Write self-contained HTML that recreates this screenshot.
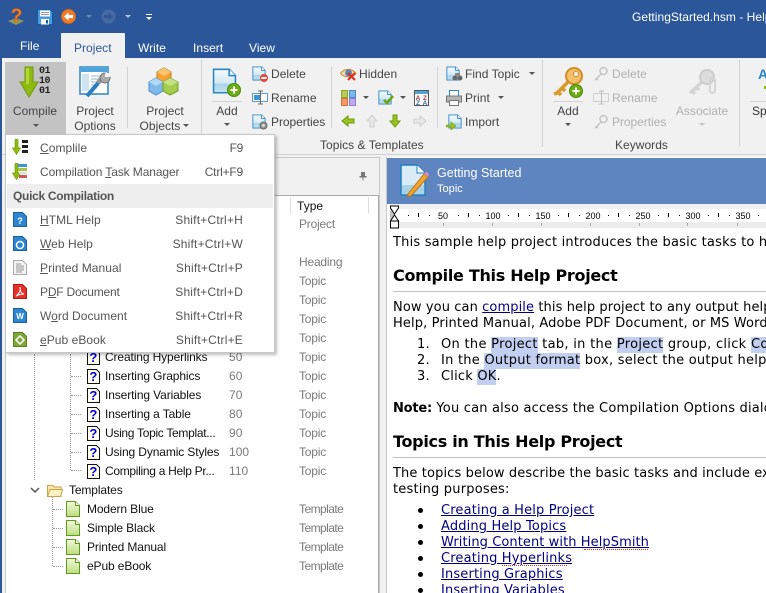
<!DOCTYPE html>
<html><head><meta charset="utf-8"><title>HelpSmith</title>
<style>
html,body{margin:0;padding:0;overflow:hidden}
html{width:766px;height:593px}
body{width:766px;height:593px;position:relative;background:#f1f1f1;font:12px/16px "Liberation Sans",sans-serif;color:#444}
div,span,svg,a{position:absolute}
#root{left:0;top:0;width:766px;height:593px;overflow:hidden}
.t{white-space:nowrap;letter-spacing:.03px}
.c{text-align:center;transform:translateX(-50%)}
.r{text-align:right;transform:translateX(-100%)}
.dis{color:#b0b0b0}
.arrow{width:0;height:0;border:3px solid transparent;border-top:3px solid #555;border-bottom:0}
.sep{width:1px;background:#d4d4d4}
.tree{color:#111;letter-spacing:-.12px}
.ty{color:#7a7a7a;letter-spacing:-.2px}
.tm{letter-spacing:-.55px}
.num{color:#7a7a7a}
.doc{font-family:"DejaVu Sans",sans-serif;font-size:13px;line-height:16px;color:#000;white-space:nowrap;letter-spacing:.2px}
.doc a{position:static;color:#00007f;text-decoration:underline}
.doc b{font-weight:bold;letter-spacing:-.2px}
.doc mark{background:#c3cff0;color:#000;padding:0;display:inline-block;line-height:16px;height:16px}
.h{font-family:"DejaVu Sans",sans-serif;font-size:16px;font-weight:bold;color:#000;white-space:nowrap;line-height:22px;letter-spacing:-.3px}
.m{color:#555;white-space:nowrap;letter-spacing:.05px}
.mr{letter-spacing:.2px}
u{text-decoration:underline}
.dot{width:5px;height:5px;background:#000;border-radius:50%}
.sp{height:0;border-top:1px dotted #d8322a}
</style></head><body>
<div id="root">
<svg width="0" height="0" style="left:0;top:0">
<defs>
<linearGradient id="pg" x1="0" y1="0" x2="0" y2="1"><stop offset="0" stop-color="#f4fafd"/><stop offset=".6" stop-color="#d4e9f5"/><stop offset=".62" stop-color="#a9d2e6"/><stop offset="1" stop-color="#c4e2f0"/></linearGradient>
<linearGradient id="tg" x1="0" y1="0" x2="0" y2="1"><stop offset="0" stop-color="#f1f8df"/><stop offset="1" stop-color="#bddd7e"/></linearGradient>
<symbol id="q" viewBox="0 0 13 15"><path d="M.5.5H9.500L12.500 3.500V14.500H.5Z" fill="#fffff4" stroke="#111"/><text x="6.400" y="12" font-family="Liberation Sans" font-weight="bold" font-size="13" fill="#0000e0" text-anchor="middle">?</text></symbol>
<symbol id="tp" viewBox="0 0 14 16"><path d="M.5.5H9.500L13.500 4.500V15.500H.5Z" fill="url(#tg)" stroke="#5f9a1a"/><path d="M9.500.5V4.500H13.500" fill="#fff" stroke="#5f9a1a"/></symbol>
<symbol id="page" viewBox="0 0 16 16"><path d="M1 .5H11L15 4.500V15.500H1Z" fill="url(#pg)" stroke="#2a86c4"/><path d="M11 .5V4.500H15" fill="#fff" stroke="#2a86c4"/></symbol>
<symbol id="plus" viewBox="0 0 14 14"><circle cx="7" cy="7" r="6.500" fill="#6cad12" stroke="#4d8a0c"/><path d="M7 3.500V10.500M3.500 7H10.500" stroke="#fff" stroke-width="2"/></symbol>
<symbol id="dk" viewBox="0 0 16 16"><g fill="none" stroke="#c4c4c4" stroke-width="1.500"><circle cx="10.500" cy="5" r="3.500"/><path d="M8 8L2 14M3 12l2 2"/></g></symbol>
</defs>
</svg>

<!-- title bar -->
<div style="left:0;top:0;width:766px;height:58px;background:#2b579a"></div>
<svg style="left:7px;top:7px" width="19" height="19" viewBox="0 0 19 19"><path d="M1 14L9 11l8 3-8 4z" fill="#8d9a5c"/><text x="9.500" y="15" font-family="Liberation Sans" font-weight="bold" font-size="19" fill="#f0821c" stroke="#c9501a" stroke-width=".5" text-anchor="middle">?</text></svg>
<svg style="left:37px;top:9px" width="16" height="16" viewBox="0 0 16 16"><path d="M.5.5H13L15.500 3V15.500H.5Z" fill="#4a9adf" stroke="#0f5f9f"/><rect x="3" y="1.500" width="10" height="6" fill="#fff"/><path d="M4 3.500H12M4 5.500H12" stroke="#99b"/><rect x="4" y="10" width="8" height="5.500" fill="#fff"/><rect x="9" y="11" width="2" height="3.500" fill="#0f5f9f"/></svg>
<svg style="left:61px;top:9px" width="15" height="15" viewBox="0 0 15 15"><circle cx="7.500" cy="7.500" r="7" fill="#ee7c2b" stroke="#d9681c"/><path d="M3 7.500L7.500 3.500V6H12V9H7.500V11.500Z" fill="#fff"/></svg>
<div class="arrow" style="left:86px;top:15px;border-top-color:#6d87b3"></div>
<svg style="left:101px;top:9px" width="15" height="15" viewBox="0 0 15 15"><circle cx="7.500" cy="7.500" r="7" fill="#47699f"/><path d="M12 7.500L7.500 3.500V6H3V9H7.500V11.500Z" fill="#2e5896"/></svg>
<div class="arrow" style="left:125px;top:15px;border-top-color:#b9c7dd"></div>
<div style="left:146px;top:14px;width:6px;height:1px;background:#fff"></div>
<div class="arrow" style="left:146px;top:17px;border-top-color:#fff"></div>
<div class="t" style="left:632px;top:9px;color:#fff">GettingStarted.hsm - Help</div>

<!-- tabs -->
<div class="t" style="left:20px;top:38px;color:#fff">File</div>
<div style="left:61px;top:33px;width:64px;height:26px;background:#f1f1f1;border-radius:1px 1px 0 0"></div>
<div class="t" style="left:74px;top:40px;color:#2b579a">Project</div>
<div class="t" style="left:138px;top:40px;color:#fff">Write</div>
<div class="t" style="left:193px;top:40px;color:#fff">Insert</div>
<div class="t" style="left:249px;top:40px;color:#fff">View</div>

<!-- ribbon -->
<div style="left:0;top:58px;width:766px;height:96px;background:#f1f1f1;border-bottom:1px solid #d0d0d0"></div>
<div style="left:0;top:58px;width:2px;height:535px;background:#2b579a"></div>
<div style="left:5px;top:62px;width:61px;height:73px;background:#c3c3c3"></div>
<svg style="left:19px;top:66px" width="34" height="32" viewBox="0 0 34 32"><path d="M6 1H14V16H19L10 31L1 16H6Z" fill="#8fbb10" stroke="#6e9a0a"/><path d="M7 2H10V18H7z" fill="#b3d63d"/></svg>
<div style="left:38px;top:67px;width:13px;font:bold 10px/10px 'Liberation Mono',monospace;color:#222;text-align:center;letter-spacing:-.5px">01<br>10<br>01</div>
<div class="t c" style="left:35px;top:103px">Compile</div>
<div class="arrow" style="left:33px;top:124px"></div>

<svg style="left:79px;top:66px" width="32" height="32" viewBox="0 0 32 32"><rect x="1" y="1" width="28" height="27" fill="#fff" stroke="#2a86c4" stroke-width="1.500"/><rect x="2" y="2" width="26" height="4" fill="#4da3dc"/><rect x="3" y="8" width="7" height="17" fill="#cfe3f3"/><path d="M12 10H24M12 13H24M12 16H20M12 19H20M12 22H18" stroke="#9db4c6"/><path d="M8 30L20 16" stroke="#2a7fc0" stroke-width="4"/><path d="M19 17L26 8" stroke="#999" stroke-width="5"/><circle cx="26" cy="12" r="5" fill="#aaa" stroke="#777"/><rect x="26" y="7" width="5" height="4" fill="#f1f1f1"/></svg>
<div class="t c" style="left:95px;top:103px">Project</div>
<div class="t c" style="left:95px;top:118px">Options</div>
<div class="sep" style="left:127px;top:67px;height:61px"></div>

<svg style="left:148px;top:67px" width="32" height="30" viewBox="0 0 32 30"><path d="M9 5L16 1 23 5V14L16 18 9 14Z" fill="#f4a235" stroke="#c97d16"/><path d="M9 5L16 9 23 5 16 1Z" fill="#f9c56f"/><path d="M1 15L8 11 15 15V24L8 28 1 24Z" fill="#7db9ea" stroke="#4a8cc4"/><path d="M1 15L8 19 15 15 8 11Z" fill="#b4d8f5"/><path d="M15 15L22 11 30 15V24L22 28 15 24Z" fill="#a4cc4e" stroke="#759d2a"/><path d="M15 15L22 19 30 15 22 11Z" fill="#c7e286"/></svg>
<div class="t c" style="left:165px;top:103px">Project</div>
<div class="t c" style="left:160px;top:118px">Objects</div>
<div class="arrow" style="left:183px;top:124px"></div>
<div class="sep" style="left:201px;top:60px;height:75px"></div>

<svg style="left:212px;top:67px" width="30" height="31" viewBox="0 0 30 31"><use href="#page" x="0" y="0" width="25" height="28"/><use href="#plus" x="15" y="16" width="14" height="14"/></svg>
<div style="left:212px;top:101px;width:30px;height:1px;background:#d4d4d4"></div>
<div class="t c" style="left:227px;top:103px">Add</div>
<div class="arrow" style="left:224px;top:123px"></div>

<svg style="left:252px;top:66px" width="16" height="16" viewBox="0 0 16 16"><use href="#page" width="14" height="15"/><circle cx="12" cy="12" r="4" fill="#e04a3a"/><rect x="9.500" y="11" width="5" height="2" fill="#fff"/></svg>
<div class="t" style="left:271px;top:66px">Delete</div>
<svg style="left:252px;top:90px" width="16" height="16" viewBox="0 0 16 16"><rect x=".5" y="3.500" width="15" height="8" fill="#fff" stroke="#5f9cc9"/><rect x="2" y="5" width="6" height="5" fill="#3f96d6"/><path d="M8.500 1V14M6 1H11M6 14H11" stroke="#666"/></svg>
<div class="t" style="left:271px;top:90px">Rename</div>
<svg style="left:252px;top:114px" width="16" height="16" viewBox="0 0 16 16"><use href="#page" width="14" height="15"/><circle cx="11.500" cy="11.500" r="3.500" fill="#999" stroke="#666"/><circle cx="11.500" cy="11.500" r="1.200" fill="#eee"/></svg>
<div class="t" style="left:271px;top:114px;letter-spacing:-.05px">Properties</div>
<div class="sep" style="left:331px;top:67px;height:61px"></div>

<svg style="left:340px;top:66px" width="17" height="16" viewBox="0 0 17 16"><path d="M.5 7.500C4 2 12 2 16 7.500 12 12 4 12 .5 7.500Z" fill="#f3dca8" stroke="#c98a2d"/><circle cx="8.500" cy="7" r="3.500" fill="#5a87b8"/><path d="M8 7L15 14M15 7L8 14" stroke="#e0281c" stroke-width="2"/></svg>
<div class="t" style="left:359px;top:66px">Hidden</div>
<svg style="left:341px;top:90px" width="15" height="16" viewBox="0 0 15 16"><rect x=".5" y=".5" width="6" height="7" fill="#b6cc55" stroke="#8ca52e"/><rect x="8.500" y=".5" width="6" height="7" fill="#7ab8ea" stroke="#4a8cc4"/><rect x=".5" y="8.500" width="6" height="7" fill="#f59a62" stroke="#d0743c"/><rect x="8.500" y="8.500" width="6" height="7" fill="#bfaaf0" stroke="#937cd0"/></svg>
<div class="arrow" style="left:363px;top:96px"></div>
<svg style="left:378px;top:90px" width="17" height="16" viewBox="0 0 17 16"><use href="#page" width="14" height="15"/><path d="M6 10L9 13 15 6" fill="none" stroke="#6ca412" stroke-width="2.500"/></svg>
<div class="arrow" style="left:400px;top:96px"></div>
<svg style="left:414px;top:90px" width="15" height="16" viewBox="0 0 15 16"><rect x=".5" y=".5" width="14" height="15" fill="#fff" stroke="#555"/><rect x="1" y="1" width="13" height="3" fill="#4da3dc"/><text x="4" y="10" font-size="6.500" font-weight="bold" font-family="Liberation Sans" fill="#a33" text-anchor="middle">A</text><text x="11" y="10" font-size="6.500" font-weight="bold" font-family="Liberation Sans" fill="#a33" text-anchor="middle">Z</text><text x="4" y="15" font-size="6.500" font-weight="bold" font-family="Liberation Sans" fill="#36a" text-anchor="middle">Z</text><text x="11" y="15" font-size="6.500" font-weight="bold" font-family="Liberation Sans" fill="#36a" text-anchor="middle">A</text></svg>

<svg style="left:341px;top:114px" width="14" height="14" viewBox="0 0 14 14"><path d="M1 7L7 2V5H13V9H7V12Z" fill="#9cc421" stroke="#6d9a0c"/></svg>
<svg style="left:365px;top:114px" width="14" height="14" viewBox="0 0 14 14"><path d="M7 1L12 7H9V13H5V7H2Z" fill="#e8e8e8" stroke="#cfcfcf"/></svg>
<svg style="left:388px;top:114px" width="14" height="14" viewBox="0 0 14 14"><path d="M7 13L12 7H9V1H5V7H2Z" fill="#9cc421" stroke="#6d9a0c"/></svg>
<svg style="left:413px;top:114px" width="14" height="14" viewBox="0 0 14 14"><path d="M13 7L7 2V5H1V9H7V12Z" fill="#e8e8e8" stroke="#cfcfcf"/></svg>
<div class="sep" style="left:437px;top:67px;height:61px"></div>

<svg style="left:446px;top:66px" width="17" height="16" viewBox="0 0 17 16"><use href="#page" width="14" height="15"/><circle cx="9" cy="12" r="2.500" fill="#666"/><circle cx="14" cy="12" r="2.500" fill="#666"/><rect x="9" y="7" width="5" height="3" fill="#888"/></svg>
<div class="t" style="left:465px;top:66px">Find Topic</div>
<div class="arrow" style="left:529px;top:72px"></div>
<svg style="left:446px;top:90px" width="16" height="16" viewBox="0 0 16 16"><rect x="3.500" y=".5" width="9" height="6" fill="#fff" stroke="#2a86c4"/><rect x=".5" y="6" width="15" height="6" fill="#b5b5b5" stroke="#777"/><rect x="3.500" y="10.500" width="9" height="5" fill="#fff" stroke="#777"/></svg>
<div class="t" style="left:465px;top:90px">Print</div>
<div class="arrow" style="left:498px;top:96px"></div>
<svg style="left:446px;top:114px" width="16" height="16" viewBox="0 0 16 16"><use href="#page" x="2" width="14" height="15"/><path d="M0 11H5V8L10 12 5 16V13H0Z" fill="#9cc421" stroke="#6d9a0c" stroke-width=".6"/></svg>
<div class="t" style="left:465px;top:114px">Import</div>
<div class="sep" style="left:542px;top:60px;height:87px"></div>

<svg style="left:553px;top:67px" width="32" height="31" viewBox="0 0 32 31"><path d="M18 12L4 26 1 27M5 25l3 3M9 21l3 3" fill="none" stroke="#d99a2c" stroke-width="3.500"/><circle cx="21" cy="9" r="8" fill="#f3c069" stroke="#d08e28" stroke-width="2"/><circle cx="23" cy="7" r="2.500" fill="#f1f1f1" stroke="#d08e28"/><use href="#plus" x="16" y="17" width="14" height="14"/></svg>
<div style="left:553px;top:101px;width:30px;height:1px;background:#d4d4d4"></div>
<div class="t c" style="left:568px;top:103px">Add</div>
<div class="arrow" style="left:565px;top:123px"></div>

<svg style="left:593px;top:66px" width="16" height="16"><use href="#dk" width="16" height="16"/></svg>
<div class="t dis" style="left:612px;top:66px">Delete</div>
<svg style="left:593px;top:90px" width="16" height="16" viewBox="0 0 16 16"><rect x=".5" y="3.500" width="15" height="8" fill="none" stroke="#cfcfcf"/><path d="M8.500 1V14M6 1H11M6 14H11" stroke="#bdbdbd"/></svg>
<div class="t dis" style="left:612px;top:90px">Rename</div>
<svg style="left:593px;top:114px" width="16" height="16"><use href="#dk" width="16" height="16"/></svg>
<div class="t dis" style="left:612px;top:114px;letter-spacing:-.05px">Properties</div>
<svg style="left:688px;top:68px" width="30" height="30" viewBox="0 0 30 30"><path d="M15 13L2 25M4 23l3 3M8 19l3 3" fill="none" stroke="#d4d4d4" stroke-width="3.500"/><circle cx="19" cy="9" r="7" fill="#dcdcdc" stroke="#cdcdcd" stroke-width="2"/><rect x="22" y="10" width="5" height="15" rx="2.500" fill="none" stroke="#d4d4d4" stroke-width="2"/></svg>
<div class="t c dis" style="left:702px;top:103px">Associate</div>
<div class="arrow" style="left:699px;top:123px;border-top-color:#c5c5c5"></div>
<div class="sep" style="left:739px;top:60px;height:87px"></div>
<div style="left:758px;top:67px;color:#2a86c4;font:bold 14px/14px 'Liberation Sans',sans-serif">A</div>
<div style="left:764px;top:86px;width:2px;height:3px;background:#8fbb10"></div>
<div style="left:750px;top:101px;width:16px;height:1px;background:#d4d4d4"></div>
<div class="t" style="left:752px;top:103px;color:#333">Spe</div>
<div class="t" style="left:320px;top:137px">Topics &amp; Templates</div>
<div class="t" style="left:615px;top:137px">Keywords</div>

<!-- left pane -->
<div style="left:5px;top:157px;width:375px;height:436px;background:#f1f1f1;border:1px solid #c8c8c8;border-bottom:0;box-sizing:border-box"></div>
<svg style="left:358px;top:171px" width="10" height="10" viewBox="0 0 10 10"><path d="M3 1H7V5H8.500V6.500H5.500V9.500H4.500V6.500H1.500V5H3Z" fill="#777"/></svg>
<div style="left:6px;top:195px;width:373px;height:398px;background:#fff;border-top:1px solid #aaa;box-sizing:border-box;border-right:1px solid #aaa"></div>
<div style="left:290px;top:197px;width:1px;height:17px;background:#ddd"></div>
<div style="left:368px;top:197px;width:1px;height:17px;background:#ddd"></div>
<div class="t" style="left:297px;top:198px;color:#111">Type</div>
<div class="t ty" style="left:299px;top:216px">Project</div>
<div class="t ty" style="left:299px;top:254px">Heading</div>
<div class="t ty" style="left:299px;top:273px">Topic</div>
<div class="t ty" style="left:299px;top:292px">Topic</div>
<div class="t ty" style="left:299px;top:311px">Topic</div>
<div class="t ty" style="left:299px;top:330px">Topic</div>

<!-- tree dotted lines -->
<div style="left:34px;top:354px;width:0;height:126px;border-left:1px dotted #999"></div>
<div style="left:70px;top:354px;width:0;height:116px;border-left:1px dotted #999"></div>
<div style="left:52px;top:497px;width:0;height:69px;border-left:1px dotted #999"></div>

<div style="left:71px;top:376px;width:10px;border-top:1px dotted #999"></div>
<div style="left:71px;top:395px;width:10px;border-top:1px dotted #999"></div>
<div style="left:71px;top:414px;width:10px;border-top:1px dotted #999"></div>
<div style="left:71px;top:433px;width:10px;border-top:1px dotted #999"></div>
<div style="left:71px;top:452px;width:10px;border-top:1px dotted #999"></div>
<div style="left:71px;top:470px;width:10px;border-top:1px dotted #999"></div>
<div style="left:53px;top:509px;width:10px;border-top:1px dotted #999"></div>
<div style="left:53px;top:528px;width:10px;border-top:1px dotted #999"></div>
<div style="left:53px;top:547px;width:10px;border-top:1px dotted #999"></div>
<div style="left:53px;top:566px;width:10px;border-top:1px dotted #999"></div>

<svg style="left:87px;top:350px" width="13" height="15"><use href="#q" width="13" height="15"/></svg>
<svg style="left:87px;top:369px" width="13" height="15"><use href="#q" width="13" height="15"/></svg>
<svg style="left:87px;top:388px" width="13" height="15"><use href="#q" width="13" height="15"/></svg>
<svg style="left:87px;top:407px" width="13" height="15"><use href="#q" width="13" height="15"/></svg>
<svg style="left:87px;top:426px" width="13" height="15"><use href="#q" width="13" height="15"/></svg>
<svg style="left:87px;top:445px" width="13" height="15"><use href="#q" width="13" height="15"/></svg>
<svg style="left:87px;top:464px" width="13" height="15"><use href="#q" width="13" height="15"/></svg>

<div class="t tree" style="left:105px;top:349px">Creating Hyperlinks</div><div class="t num" style="left:229px;top:349px">50</div><div class="t ty" style="left:299px;top:349px">Topic</div>
<div class="t tree" style="left:105px;top:368px">Inserting Graphics</div><div class="t num" style="left:229px;top:368px">60</div><div class="t ty" style="left:299px;top:368px">Topic</div>
<div class="t tree" style="left:105px;top:387px">Inserting Variables</div><div class="t num" style="left:229px;top:387px">70</div><div class="t ty" style="left:299px;top:387px">Topic</div>
<div class="t tree" style="left:105px;top:406px">Inserting a Table</div><div class="t num" style="left:229px;top:406px">80</div><div class="t ty" style="left:299px;top:406px">Topic</div>
<div class="t tree" style="left:105px;top:425px;letter-spacing:-.3px">Using Topic Templat...</div><div class="t num" style="left:229px;top:425px">90</div><div class="t ty" style="left:299px;top:425px">Topic</div>
<div class="t tree" style="left:105px;top:444px">Using Dynamic Styles</div><div class="t num" style="left:229px;top:444px">100</div><div class="t ty" style="left:299px;top:444px">Topic</div>
<div class="t tree" style="left:105px;top:463px;letter-spacing:-.3px">Compiling a Help Pr...</div><div class="t num" style="left:229px;top:463px">110</div><div class="t ty" style="left:299px;top:463px">Topic</div>

<svg style="left:30px;top:487px" width="10" height="7" viewBox="0 0 10 7"><path d="M1 1L5 5 9 1" fill="none" stroke="#555" stroke-width="1.500"/></svg>
<svg style="left:47px;top:484px" width="16" height="13" viewBox="0 0 16 13"><path d="M.5 12.500V1.500H6L7 3H14V12.500Z" fill="#fbe6a6" stroke="#c9a24e"/><path d="M.5 12.500L3 5.500H15.500L13.500 12.500Z" fill="#fdf0c2" stroke="#c9a24e"/></svg>
<div class="t tree" style="left:69px;top:482px">Templates</div>

<svg style="left:66px;top:501px" width="14" height="16"><use href="#tp" width="14" height="16"/></svg>
<svg style="left:66px;top:520px" width="14" height="16"><use href="#tp" width="14" height="16"/></svg>
<svg style="left:66px;top:539px" width="14" height="16"><use href="#tp" width="14" height="16"/></svg>
<svg style="left:66px;top:558px" width="14" height="16"><use href="#tp" width="14" height="16"/></svg>
<div class="t tree" style="left:87px;top:501px">Modern Blue</div><div class="t ty tm" style="left:299px;top:501px">Template</div>
<div class="t tree" style="left:87px;top:520px">Simple Black</div><div class="t ty tm" style="left:299px;top:520px">Template</div>
<div class="t tree" style="left:87px;top:539px">Printed Manual</div><div class="t ty tm" style="left:299px;top:539px">Template</div>
<div class="t tree" style="left:87px;top:558px">ePub eBook</div><div class="t ty tm" style="left:299px;top:558px">Template</div>

<!-- document pane -->
<div style="left:386px;top:157px;width:380px;height:436px;background:#fff;border-left:1px solid #c8c8c8;box-sizing:border-box"></div>
<div style="left:387px;top:158px;width:379px;height:46px;background:#5f85c1"></div>
<svg style="left:400px;top:164px" width="30" height="33" viewBox="0 0 30 33"><path d="M1 1H17L25 9V31H1Z" fill="#d8ebf6" stroke="#1d7fbd" stroke-width="1.500"/><path d="M17 1V9H25" fill="#fff" stroke="#1d7fbd"/><rect x="2" y="21" width="22" height="9" fill="#a9d2e6"/><path d="M8 30L24 10 28 13 11 32 7 32Z" fill="#f3a531" stroke="#b77415"/><path d="M24 10L26 7.500 29 10 28 13Z" fill="#e08cc0"/></svg>
<div class="t" style="left:437px;top:165px;color:#fff;font-size:12.500px">Getting Started</div>
<div class="t" style="left:437px;top:181px;color:#fff;font-size:11px">Topic</div>

<!-- ruler -->
<div style="left:390px;top:204px;width:376px;height:5px;background:#f0f0f0"></div>
<div style="left:390px;top:222px;width:376px;height:6px;background:#ececec"></div>
<div style="left:390px;top:209px;width:4px;height:13px;background:#c0c0c0"></div>
<svg style="left:389px;top:205px" width="377" height="24" viewBox="0 0 377 24"><path d="M1.500 1H9.500V3L5.500 9 1.500 3ZM1.500 16L5.500 10 9.500 16Z" fill="#fff" stroke="#000"/><rect x="1.500" y="16" width="8" height="7" fill="#fff" stroke="#000"/>
<g fill="#000"><rect x="19" y="10" width="1" height="1"/><rect x="29" y="8" width="1" height="4"/><rect x="40" y="10" width="1" height="1"/><rect x="69" y="10" width="1" height="1"/><rect x="79" y="8" width="1" height="4"/><rect x="90" y="10" width="1" height="1"/><rect x="119" y="10" width="1" height="1"/><rect x="129" y="8" width="1" height="4"/><rect x="140" y="10" width="1" height="1"/><rect x="169" y="10" width="1" height="1"/><rect x="179" y="8" width="1" height="4"/><rect x="190" y="10" width="1" height="1"/><rect x="219" y="10" width="1" height="1"/><rect x="229" y="8" width="1" height="4"/><rect x="240" y="10" width="1" height="1"/><rect x="269" y="10" width="1" height="1"/><rect x="279" y="8" width="1" height="4"/><rect x="290" y="10" width="1" height="1"/><rect x="319" y="10" width="1" height="1"/><rect x="329" y="8" width="1" height="4"/><rect x="340" y="10" width="1" height="1"/><rect x="369" y="10" width="1" height="1"/></g>
<g fill="#aaa"><rect x="54" y="18" width="1" height="3"/><rect x="103" y="18" width="1" height="3"/><rect x="152" y="18" width="1" height="3"/><rect x="201" y="18" width="1" height="3"/><rect x="250" y="18" width="1" height="3"/><rect x="298" y="18" width="1" height="3"/><rect x="348" y="18" width="1" height="3"/></g>
<g font-family="Liberation Sans" font-size="9" fill="#000" text-anchor="middle"><text x="54" y="14">50</text><text x="104" y="14">100</text><text x="154" y="14">150</text><text x="204" y="14">200</text><text x="254" y="14">250</text><text x="304" y="14">300</text><text x="354" y="14">350</text></g></svg>

<div class="doc" style="left:393px;top:235px">This sample help project introduces the basic tasks to help</div>
<div class="h" style="left:393px;top:265px">Compile This Help Project</div>
<div style="left:393px;top:291px;width:373px;height:1px;background:#c0c0c0"></div>
<div class="doc" style="left:393px;top:300px;letter-spacing:.1px">Now you can <a>compile</a> this help project to any output help</div>
<div class="doc" style="left:393px;top:316px;letter-spacing:.12px">Help, Printed Manual, Adobe PDF Document, or MS Word Doc</div>
<div class="doc" style="left:417px;top:337px">1.</div><div class="doc" style="left:441px;top:337px;letter-spacing:.3px">On the <mark>Project</mark> tab, in the <mark>Project</mark> group, click <mark>Compile</mark></div>
<div class="doc" style="left:417px;top:353px">2.</div><div class="doc" style="left:441px;top:353px;letter-spacing:.25px">In the <mark>Output format</mark> box, select the output help format</div>
<div class="doc" style="left:417px;top:369px">3.</div><div class="doc" style="left:441px;top:369px">Click <mark>OK</mark>.</div>
<div class="doc" style="left:393px;top:401px"><b>Note:</b> You can also access the Compilation Options dialog</div>
<div class="h" style="left:393px;top:431px">Topics in This Help Project</div>
<div style="left:393px;top:457px;width:373px;height:1px;background:#c0c0c0"></div>
<div class="doc" style="left:393px;top:466px;letter-spacing:.12px">The topics below describe the basic tasks and include exam</div>
<div class="doc" style="left:393px;top:482px">testing purposes:</div>
<div class="dot" style="left:418px;top:508px"></div><div class="doc" style="left:441px;top:503px;letter-spacing:.15px"><a>Creating a Help Project</a></div>
<div class="dot" style="left:418px;top:524px"></div><div class="doc" style="left:441px;top:519px;letter-spacing:.15px"><a>Adding Help Topics</a></div>
<div class="dot" style="left:418px;top:540px"></div><div class="doc" style="left:441px;top:535px;letter-spacing:.08px"><a>Writing Content with HelpSmith</a></div>
<div class="dot" style="left:418px;top:556px"></div><div class="doc" style="left:441px;top:551px;letter-spacing:.15px"><a>Creating Hyperlinks</a></div>
<div class="dot" style="left:418px;top:572px"></div><div class="doc" style="left:441px;top:567px;letter-spacing:.15px"><a>Inserting Graphics</a></div>
<div class="dot" style="left:418px;top:588px"></div><div class="doc" style="left:441px;top:583px;letter-spacing:.15px"><a>Inserting Variables</a></div>
<div class="sp" style="left:584px;top:549px;width:64px"></div>
<div class="sp" style="left:502px;top:565px;width:65px"></div>

<!-- dropdown menu -->
<div style="left:5px;top:134px;width:270px;height:219px;background:#fff;border:1px solid #c6c6c6;box-sizing:border-box;box-shadow:2px 2px 3px rgba(0,0,0,.25)"></div>
<div style="left:7px;top:184px;width:266px;height:24px;background:#eeeeee"></div>
<svg style="left:12px;top:139px" width="18" height="16" viewBox="0 0 18 16"><path d="M3 .5H6V9H8.500L4.500 15.500.5 9H3Z" fill="#8fbb10" stroke="#6e9a0c" stroke-width=".7"/><g fill="#222"><rect x="10" y="1" width="6" height="3"/><rect x="10" y="6" width="6" height="3"/><rect x="10" y="11" width="6" height="3"/></g></svg>
<svg style="left:12px;top:163px" width="16" height="17" viewBox="0 0 16 17"><path d="M3 .5H6V10H8.500L4.500 16.500.5 10H3Z" fill="#8fbb10" stroke="#6e9a0c" stroke-width=".7"/><rect x="6" y="1" width="9" height="3" fill="#3f96d6"/><rect x="6" y="5" width="9" height="3" fill="#a8c63c"/><rect x="7" y="9" width="8" height="2" fill="#ddd"/><rect x="7" y="12" width="8" height="3" fill="#d9534f"/></svg>
<svg style="left:13px;top:212px" width="14" height="15" viewBox="0 0 14 15"><path d="M.5.5H9.500L13.500 4.500V14.500H.5Z" fill="#2f86d0" stroke="#1a5f9f"/><text x="7" y="12" font-family="Liberation Sans" font-weight="bold" font-size="9" fill="#fff" text-anchor="middle">?</text></svg>
<svg style="left:13px;top:236px" width="14" height="15" viewBox="0 0 14 15"><path d="M.5.5H9.500L13.500 4.500V14.500H.5Z" fill="#2f86d0" stroke="#1a5f9f"/><circle cx="7" cy="9" r="3.500" fill="none" stroke="#fff" stroke-width="1.500"/></svg>
<svg style="left:13px;top:260px" width="14" height="15" viewBox="0 0 14 15"><path d="M.5.5H9.500L13.500 4.500V14.500H.5Z" fill="#f4f4f4" stroke="#aaa"/><path d="M3 4H8M3 6H11M3 8H11M3 10H11M3 12H9" stroke="#999"/></svg>
<svg style="left:13px;top:284px" width="14" height="15" viewBox="0 0 14 15"><path d="M.5.5H9.500L13.500 4.500V14.500H.5Z" fill="#e8302a" stroke="#b01a16"/><path d="M3 12C6 10 8 6 7 3 7 8 9 10 11 10 8 10 5 11 3 12Z" fill="none" stroke="#fff"/></svg>
<svg style="left:13px;top:308px" width="14" height="15" viewBox="0 0 14 15"><path d="M.5.5H9.500L13.500 4.500V14.500H.5Z" fill="#2f86d0" stroke="#1a5f9f"/><text x="7" y="11" font-family="Liberation Sans" font-weight="bold" font-size="8" fill="#fff" text-anchor="middle">W</text></svg>
<svg style="left:13px;top:332px" width="14" height="15" viewBox="0 0 14 15"><path d="M.5.5H9.500L13.500 4.500V14.500H.5Z" fill="#7fa83a" stroke="#5a7f20"/><path d="M7 4L11 8 7 12 3 8Z" fill="none" stroke="#fff" stroke-width="1.500"/></svg>

<div class="m" style="left:40px;top:140px"><u>C</u>omplile</div><div class="m r" style="left:243px;top:140px;letter-spacing:-.3px">F9</div>
<div class="m" style="left:40px;top:164px;letter-spacing:-.1px">Compilation <u>T</u>ask Manager</div><div class="m r" style="left:243px;top:164px;letter-spacing:-.2px">Ctrl+F9</div>
<div class="m" style="left:13px;top:188px;font-weight:bold;color:#555;letter-spacing:-.3px">Quick Compilation</div>
<div class="m" style="left:40px;top:212px"><u>H</u>TML Help</div><div class="m mr r" style="left:243px;top:212px">Shift+Ctrl+H</div>
<div class="m" style="left:40px;top:236px"><u>W</u>eb Help</div><div class="m mr r" style="left:243px;top:236px">Shift+Ctrl+W</div>
<div class="m" style="left:40px;top:260px"><u>P</u>rinted Manual</div><div class="m mr r" style="left:243px;top:260px">Shift+Ctrl+P</div>
<div class="m" style="left:40px;top:284px;letter-spacing:-.2px">P<u>D</u>F Document</div><div class="m mr r" style="left:243px;top:284px">Shift+Ctrl+D</div>
<div class="m" style="left:40px;top:308px">W<u>o</u>rd Document</div><div class="m mr r" style="left:243px;top:308px">Shift+Ctrl+R</div>
<div class="m" style="left:40px;top:332px"><u>e</u>Pub eBook</div><div class="m mr r" style="left:243px;top:332px">Shift+Ctrl+E</div>
</div>
</body></html>
